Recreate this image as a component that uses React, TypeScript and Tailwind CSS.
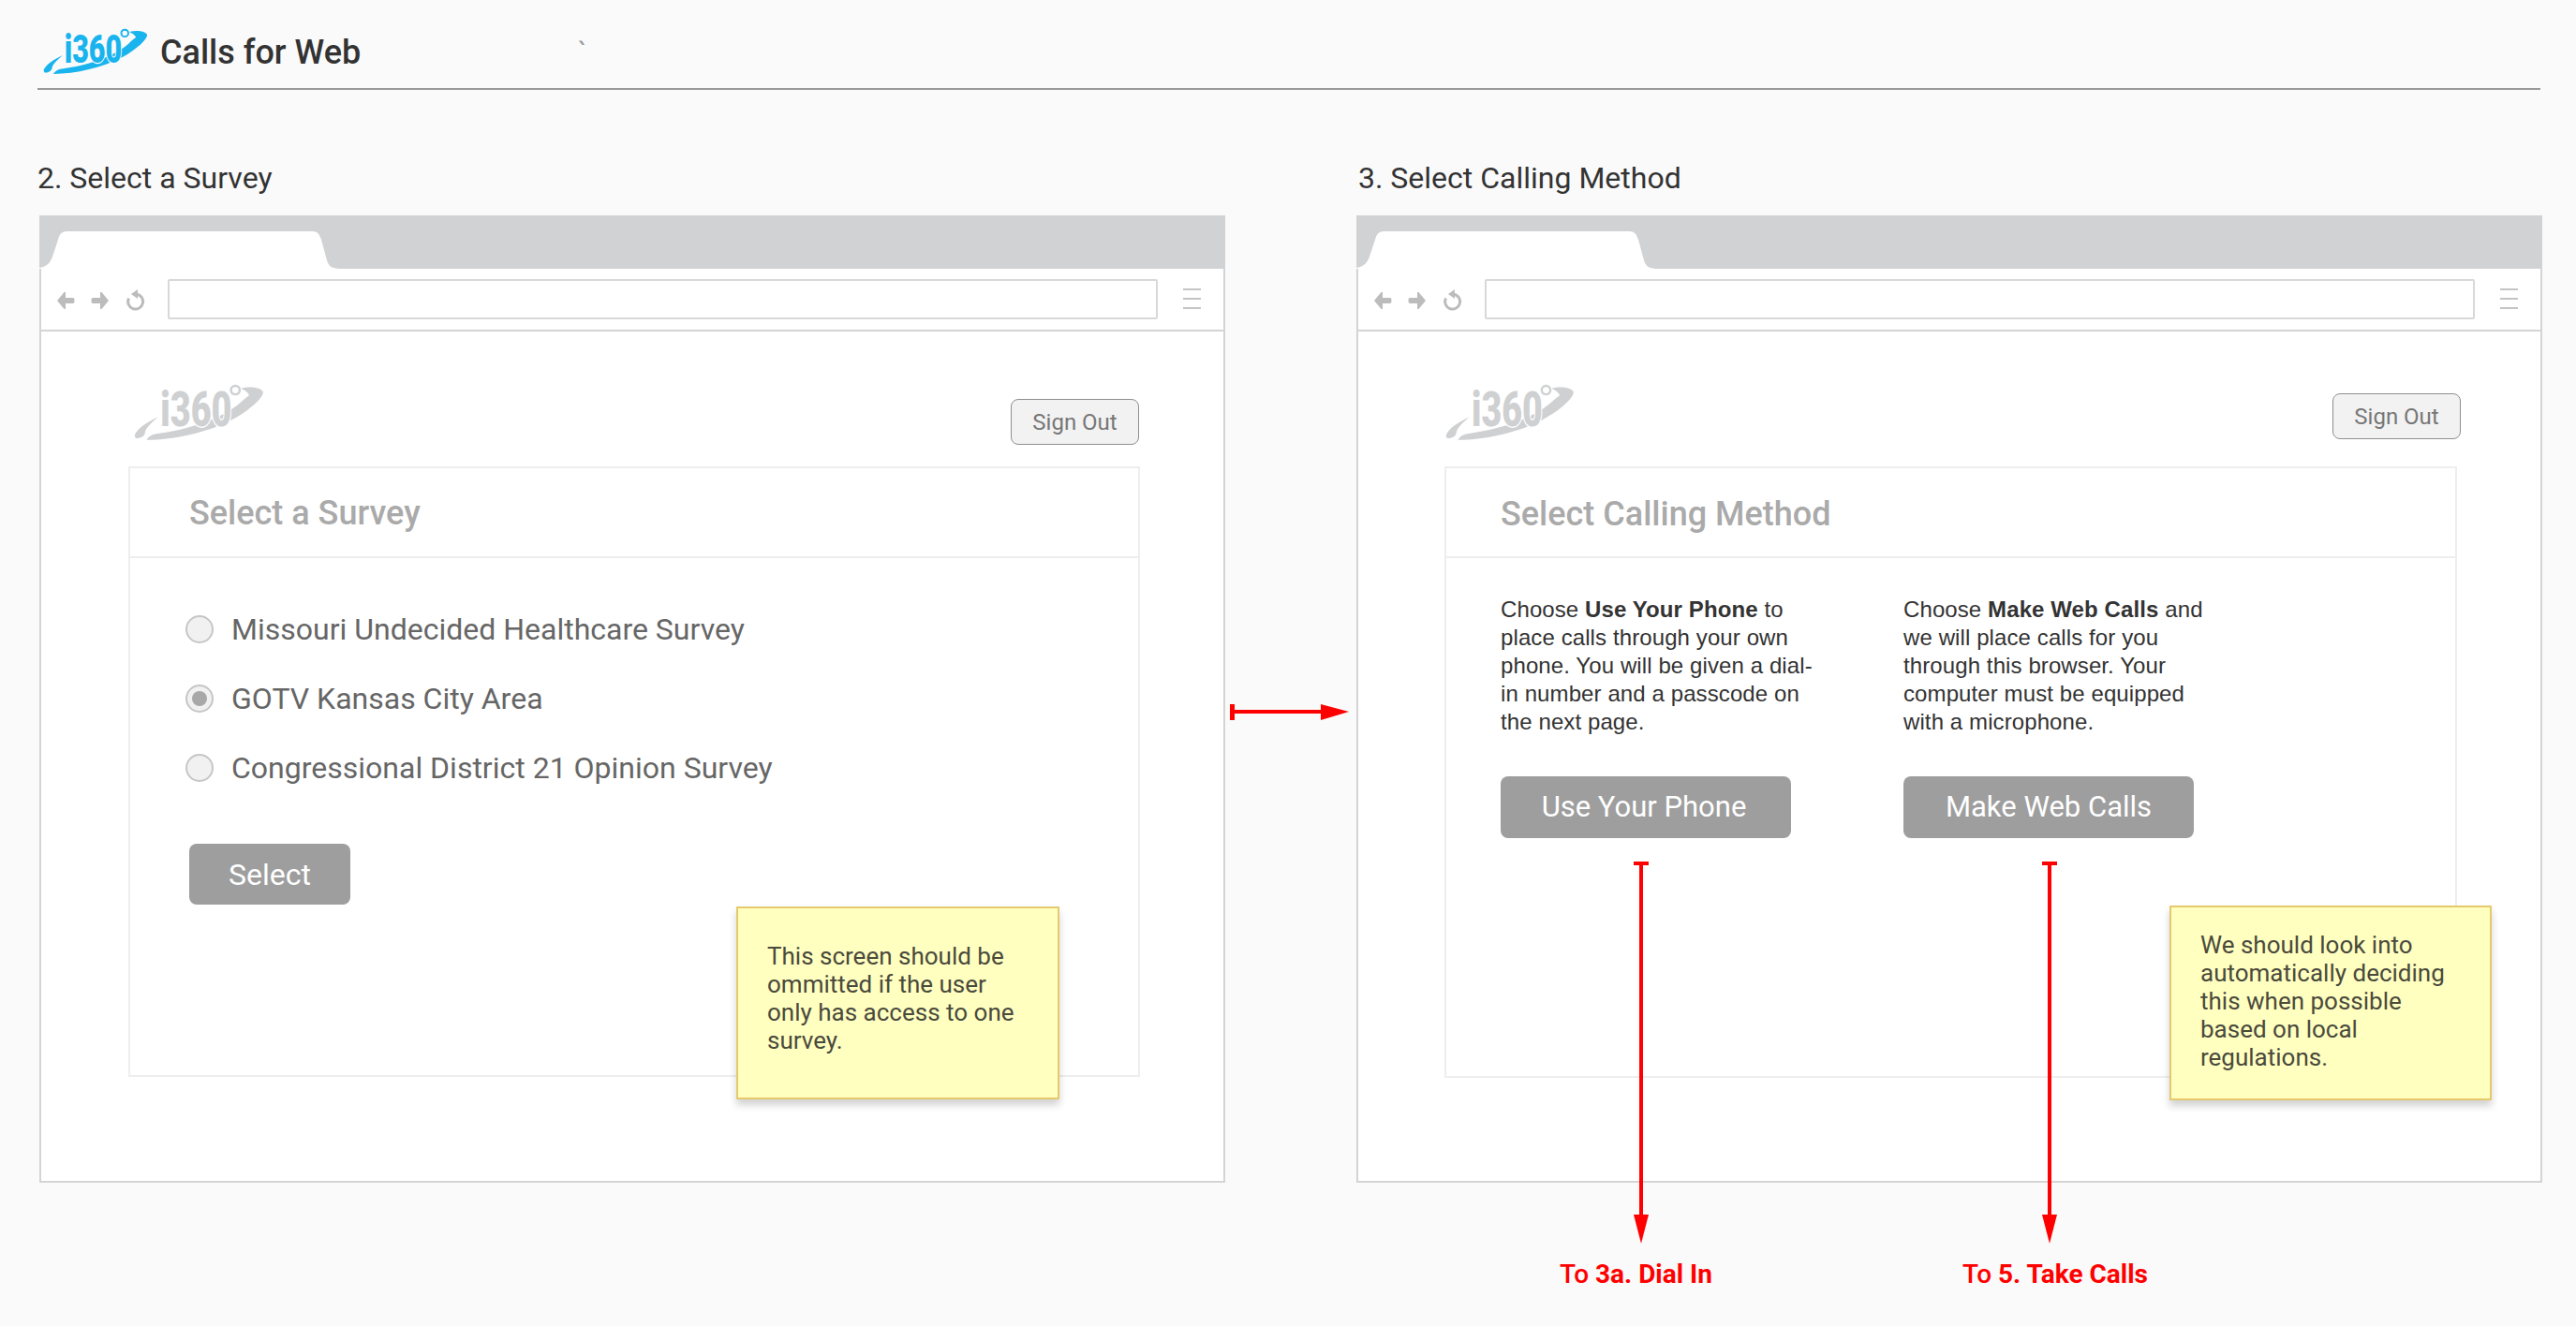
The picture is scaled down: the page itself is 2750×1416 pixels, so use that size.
import React from "react";

function Logo({ color, halo, className }: { color: string; halo: string; className: string }) {
  return (
    <svg viewBox="0 0 113 51" preserveAspectRatio="none" className={`overflow-visible ${className}`}>
      <path d="M0.5 46 C3 39 12 34 21 29.5 C16 34 10 39 9.5 44 C9 47 4 49 1.5 48.5 Z" fill={color} />
      <path d="M11 50 C13 46 17 44.5 22 44 C45 41 75 32 92 17 C96 13 99 11 100 10 C98 6 94 5 93 4 C100 2 110 3 112 7 C113 12 100 24 85 32 C65 43 35 50 11 50 Z" fill={color} />
      <text x="23" y="38" fontFamily="Roboto, sans-serif" fontWeight="900" fontSize="43" textLength="62" lengthAdjust="spacingAndGlyphs" fill={color} stroke={halo} strokeWidth="2.4" paintOrder="stroke">i360</text>
      <circle cx="88" cy="5.5" r="3.8" fill={halo} stroke={color} strokeWidth="2" />
    </svg>
  );
}

function Chrome() {
  return (
    <>
      <div className="h-[57px] bg-[#d1d2d4]">
        <svg viewBox="0 0 330 57" className="w-[330px] h-[57px] block">
          <path d="M0 57 L0 56 C8 55 12 50 14 44 L20 26 C21.500 20 24 17 30 17 L291 17 C297 17 299 20 301 26 L307 48 C309 55 313 57 323 57 Z" fill="#fff" />
        </svg>
      </div>
      <div className="h-[67px] flex items-center border-b-2 border-[#d4d4d4] pl-[19px] pb-[1px]">
        <svg viewBox="0 0 96 24" className="w-[96px] h-[24px] block mt-[3px]">
          <path d="M0 12 L7.500 3 L9 3 L9 9 L17 9 Q18.500 9 18.500 12 Q18.500 15 17 15 L9 15 L9 21 L7.500 21 Z" fill="#bcbcbc" />
          <path d="M55 12 L47.500 3 L46 3 L46 9 L38 9 Q36.500 9 36.500 12 Q36.500 15 38 15 L46 15 L46 21 L47.500 21 Z" fill="#bcbcbc" />
          <path d="M85 5.200 A8 8 0 1 1 76.500 9.500" fill="none" stroke="#bcbcbc" strokeWidth="3" />
          <path d="M86 0 L79 5 L86 10 Z" fill="#bcbcbc" />
        </svg>
        <div className="ml-[22px] w-[1057px] h-[43px] border-2 border-[#d8d8d8] rounded-[2px] bg-white" />
        <div className="ml-[27px] w-[19px] flex flex-col gap-[8px]">
          <div className="h-[2px] bg-[#c4c4c4]" />
          <div className="h-[2px] bg-[#c4c4c4]" />
          <div className="h-[2px] bg-[#c4c4c4]" />
        </div>
      </div>
    </>
  );
}

function SignOut({ className }: { className: string }) {
  return (
    <button className={`w-[137px] h-[49px] rounded-[8px] border border-[#8f8f8f] bg-[#f2f2f2] text-[#777] text-[24px] font-['Roboto',sans-serif] ${className}`}>
      Sign Out
    </button>
  );
}

function Radio({ checked }: { checked?: boolean }) {
  return (
    <span className="w-[30px] h-[30px] rounded-full border-2 border-[#c6c6c6] bg-[#f1f1f1] flex items-center justify-center shrink-0">
      {checked && <span className="w-[16px] h-[16px] rounded-full bg-[#a8a8a8]" />}
    </span>
  );
}

function Note({ className, children }: { className: string; children: React.ReactNode }) {
  return (
    <div className={`absolute border-2 border-[#e6c96c] bg-[#ffffc0] shadow-[0_6px_8px_rgba(0,0,0,0.18)] text-[#4a4a3c] text-[26px] leading-[30px] font-['Roboto',sans-serif] ${className}`}>
      {children}
    </div>
  );
}

function Browser({ children }: { children: React.ReactNode }) {
  return (
    <div className="relative w-[1266px] h-[1033px] bg-white border-x-2 border-b-2 border-[#d4d4d4]">
      <div className="-mx-[2px]">
        <Chrome />
      </div>
      {children}
    </div>
  );
}

function PrimaryButton({ className, children }: { className: string; children: React.ReactNode }) {
  return (
    <button className={`rounded-[8px] bg-[#9e9e9e] text-white font-['Roboto',sans-serif] ${className}`}>
      {children}
    </button>
  );
}

const VArrow = ({ x }: { x: number }) => (
  <g fill="#ff0000">
    <rect x={x - 8} y="920" width="16" height="4" />
    <rect x={x - 2} y="920" width="4" height="380" />
    <path d={`M${x - 8} 1297 L${x + 8} 1297 L${x} 1328 Z`} />
  </g>
);

export default function App() {
  return (
    <div className="relative w-[2750px] h-[1416px] bg-[#fafafa] overflow-hidden font-['Roboto',sans-serif]">
      <header className="relative ml-[40px] w-[2672px] h-[96px] border-b-2 border-[#999] flex items-start">
        <Logo color="#19b4ee" halo="#fafafa" className="ml-[6px] mt-[30px] w-[112px] h-[50px]" />
        <h1 className="ml-[13px] mt-[32px] text-[36px] leading-[48px] font-medium text-[#333]">Calls for Web</h1>
        <span className="absolute left-[577px] top-[38px] text-[30px] leading-[36px] text-[#999]">`</span>
      </header>

      <div className="flex mt-[72px] pl-[40px]">
        <section className="w-[1408px]">
          <h2 className="text-[32px] leading-[40px] text-[#333] h-[62px] pt-[2px]">2. Select a Survey</h2>
          <div className="ml-[2px]">
            <Browser>
              <div className="relative pl-[93px] pr-[89px]">
                <div className="flex justify-between h-[144px]">
                  <Logo color="#cfd0d2" halo="#ffffff" className="ml-[6px] mt-[56px] w-[139px] h-[61px]" />
                  <SignOut className="mt-[72px] mr-[1px]" />
                </div>
                <div className="h-[652px] border-2 border-[#eeeeee] w-[1080px]">
                  <div className="h-[96px] border-b-2 border-[#eeeeee] pl-[63px] pt-[2px] flex items-center">
                    <h3 className="text-[36px] font-medium text-[#aaaaaa]">Select a Survey</h3>
                  </div>
                  <div className="pl-[59px] pt-[61px]">
                    {[
                      ["Missouri Undecided Healthcare Survey", false],
                      ["GOTV Kansas City Area", true],
                      ["Congressional District 21 Opinion Survey", false],
                    ].map(([label, on]) => (
                      <label key={label as string} className="flex items-center gap-[19px] h-[30px] mb-[44px] text-[32px] text-[#666]">
                        <Radio checked={on as boolean} />
                        {label as string}
                      </label>
                    ))}
                    <PrimaryButton className="ml-[4px] mt-[22px] w-[172px] h-[65px] text-[32px]">Select</PrimaryButton>
                  </div>
                </div>
              </div>
              <Note className="left-[742px] top-[738px] w-[345px] h-[206px] pl-[31px] pt-[36px]">
                This screen should be
                <br />
                ommitted if the user
                <br />
                only has access to one
                <br />
                survey.
              </Note>
            </Browser>
          </div>
        </section>

        <section className="w-[1268px]">
          <h2 className="text-[32px] leading-[40px] text-[#333] h-[62px] ml-[2px] pt-[2px]">3. Select Calling Method</h2>
          <Browser>
            <div className="relative pl-[92px]">
              <div className="flex justify-between h-[144px] w-[1085px]">
                <Logo color="#cfd0d2" halo="#ffffff" className="ml-[1px] mt-[56px] w-[138px] h-[61px]" />
                <SignOut className="mt-[66px]" />
              </div>
              <div className="h-[653px] border-2 border-[#eeeeee] w-[1081px]">
                <div className="h-[96px] border-b-2 border-[#eeeeee] pl-[58px] pt-[3px] flex items-center">
                  <h3 className="text-[36px] font-medium text-[#aaaaaa]">Select Calling Method</h3>
                </div>
                <div className="pl-[58px] pt-[40px] flex gap-[120px] font-['Liberation_Sans',sans-serif] text-[24px] leading-[30px] text-[#333]">
                  <div className="w-[310px]">
                    <p className="h-[193px] whitespace-nowrap tracking-[0.1px]">
                      Choose <b>Use Your Phone</b> to
                      <br />
                      place calls through your own
                      <br />
                      phone. You will be given a dial-
                      <br />
                      in number and a passcode on
                      <br />
                      the next page.
                    </p>
                    <PrimaryButton className="w-[310px] h-[66px] text-[31px] pr-[4px]">Use Your Phone</PrimaryButton>
                  </div>
                  <div className="w-[310px]">
                    <p className="h-[193px] whitespace-nowrap tracking-[0.1px]">
                      Choose <b>Make Web Calls</b> and
                      <br />
                      we will place calls for you
                      <br />
                      through this browser. Your
                      <br />
                      computer must be equipped
                      <br />
                      with a microphone.
                    </p>
                    <PrimaryButton className="w-[310px] h-[66px] text-[31px]">Make Web Calls</PrimaryButton>
                  </div>
                </div>
              </div>
            </div>
            <Note className="left-[866px] top-[737px] w-[344px] h-[208px] pl-[31px] pt-[25px]">
              We should look into
              <br />
              automatically deciding
              <br />
              this when possible
              <br />
              based on local
              <br />
              regulations.
            </Note>
          </Browser>
        </section>
      </div>

      <svg viewBox="0 0 2750 1416" className="absolute left-0 top-0 w-[2750px] h-[1416px] pointer-events-none">
        <g fill="#ff0000">
          <rect x="1313" y="752" width="5" height="17" />
          <rect x="1313" y="758" width="100" height="4" />
          <path d="M1410 752 L1440 760 L1410 769 Z" />
        </g>
        <VArrow x={1752} />
        <VArrow x={2188} />
      </svg>

      <div className="absolute left-[1665px] top-[1344px] text-[28px] leading-[34px] text-[#ff0000] font-medium">
        To <b className="font-bold">3a. Dial In</b>
      </div>
      <div className="absolute left-[2095px] top-[1344px] text-[28px] leading-[34px] text-[#ff0000] font-medium">
        To <b className="font-bold">5. Take Calls</b>
      </div>
    </div>
  );
}
